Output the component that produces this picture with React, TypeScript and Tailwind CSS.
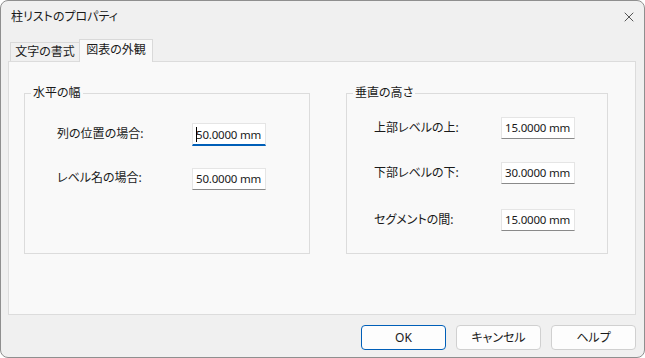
import { X } from 'lucide-react';

const FONT = "font-['Noto_Sans','Noto_Sans_CJK_JP',sans-serif] [font-feature-settings:'palt']";

function Field({ value, focused = false }: { value: string; focused?: boolean }) {
  return (
    <div
      className={
        focused
          ? 'relative flex h-[23px] w-[74px] items-center whitespace-nowrap border border-[#e5e5e5] border-b-2 border-b-[#005fb8] bg-white pl-[3px] pt-px text-[11.5px] tracking-[-0.2px] text-[#1a1a1a]'
          : 'flex h-[22px] w-[74px] items-center whitespace-nowrap border border-[#e5e5e5] border-b-[#8a8a8a] bg-white pl-[3px] text-[11.5px] tracking-[-0.2px] text-[#1a1a1a]'
      }
    >
      {focused && <span className="absolute left-[3px] top-[3px] h-[15px] w-px bg-black" />}
      {value}
    </div>
  );
}

function GroupBox({ title, className, children }: { title: string; className: string; children: React.ReactNode }) {
  return (
    <div className={`relative border border-[#dcdcdc] ${className}`}>
      <span className="absolute -top-[9px] left-[6px] bg-[#f9f9f9] px-[2px] text-[12px] leading-[16px] text-[#1a1a1a]">
        {title}
      </span>
      {children}
    </div>
  );
}

function Button({ label, primary = false }: { label: string; primary?: boolean }) {
  return (
    <button
      className={
        primary
          ? 'flex h-[25px] w-[85px] items-center justify-center rounded-[4px] border border-[#005fb8] bg-[#fdfdfd] text-[12px] text-[#1a1a1a]'
          : 'flex h-[25px] w-[85px] items-center justify-center rounded-[4px] border border-[#d0d0d0] bg-[#fdfdfd] text-[12px] text-[#1a1a1a]'
      }
    >
      {label}
    </button>
  );
}

export default function App() {
  return (
    <div className={`h-[358px] w-[645px] bg-white ${FONT}`}>
      <div className="flex h-full flex-col overflow-hidden rounded-[8px] border border-[#8f8f8f] bg-[#f0f0f0]">
        {/* Title bar */}
        <div className="flex h-[31px] shrink-0 items-center justify-between pl-[10px] pr-[7px]">
          <span className="text-[12px] text-[#1a1a1a]">柱リストのプロパティ</span>
          <X size={16} strokeWidth={1.1} className="text-[#1a1a1a]" />
        </div>

        <div className="flex flex-1 flex-col pl-[7px] pr-[8px] pt-[7px]">
          {/* Tabs */}
          <div className="relative z-10 flex h-[22px] items-end pl-[2px]">
            <div className="flex h-[19px] w-[70px] items-center justify-center border border-b-0 border-[#d9d9d9] bg-[#f0f0f0] text-[12px] text-[#1a1a1a]">
              文字の書式
            </div>
            <div className="-ml-px -mb-px flex h-[23px] w-[74px] items-center justify-center border border-b-0 border-[#d9d9d9] bg-[#f9f9f9] pb-[3px] text-[12px] text-[#1a1a1a]">
              図表の外観
            </div>
          </div>

          {/* Tab panel */}
          <div className="flex h-[254px] gap-[36px] border border-[#dcdcdc] bg-[#f9f9f9] pl-[15px] pt-[31px]">
            <GroupBox title="水平の幅" className="h-[161px] w-[286px] pl-[32px] pt-[29px]">
              <div className="grid grid-cols-[135px_74px] items-center gap-y-[22px] text-[12px] text-[#1a1a1a]">
                <span className="-mt-[2px]">列の位置の場合:</span>
                <Field value="50.0000 mm" focused />
                <span className="-mt-[2px]">レベル名の場合:</span>
                <Field value="50.0000 mm" />
              </div>
            </GroupBox>

            <GroupBox title="垂直の高さ" className="h-[161px] w-[262px] pl-[27px] pt-[23px]">
              <div className="flex flex-col text-[12px] text-[#1a1a1a]">
                <div className="flex items-center">
                  <span className="w-[127px]">上部レベルの上:</span>
                  <Field value="15.0000 mm" />
                </div>
                <div className="mt-[23px] flex items-center">
                  <span className="w-[127px]">下部レベルの下:</span>
                  <Field value="30.0000 mm" />
                </div>
                <div className="mt-[25px] flex items-center">
                  <span className="w-[127px]">セグメントの間:</span>
                  <Field value="15.0000 mm" />
                </div>
              </div>
            </GroupBox>
          </div>

          {/* Buttons */}
          <div className="mt-[10px] flex justify-end gap-[10px]">
            <Button label="OK" primary />
            <Button label="キャンセル" />
            <Button label="ヘルプ" />
          </div>
        </div>
      </div>
    </div>
  );
}
